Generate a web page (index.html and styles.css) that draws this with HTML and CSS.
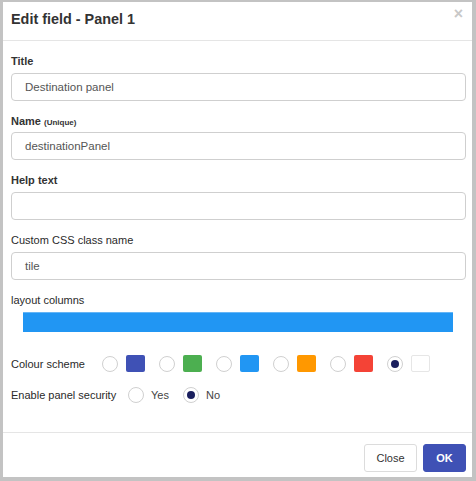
FILE: index.html
```html
<!DOCTYPE html>
<html>
<head>
<meta charset="utf-8">
<link rel="stylesheet" href="styles.css">
</head>
<body>
<div class="dialog">
  <div class="header">
    <h1 class="title">Edit field - Panel 1</h1>
    <span class="close-x">×</span>
  </div>
  <div class="body">
    <div class="group">
      <label class="lbl bold">Title</label>
      <div class="input">Destination panel</div>
    </div>
    <div class="group">
      <label class="lbl bold">Name <small class="small">(Unique)</small></label>
      <div class="input">destinationPanel</div>
    </div>
    <div class="group">
      <label class="lbl bold">Help text</label>
      <div class="input"></div>
    </div>
    <div class="group">
      <label class="lbl">Custom CSS class name</label>
      <div class="input">tile</div>
    </div>
    <div class="group">
      <label class="lbl">layout columns</label>
      <div class="bar"></div>
    </div>
    <div class="row colour-row">
      <span class="lbl row-lbl colour-lbl">Colour scheme</span>
      <span class="opt"><span class="radio"></span><span class="swatch indigo"></span></span>
      <span class="opt"><span class="radio"></span><span class="swatch green"></span></span>
      <span class="opt"><span class="radio"></span><span class="swatch blue"></span></span>
      <span class="opt"><span class="radio"></span><span class="swatch orange"></span></span>
      <span class="opt"><span class="radio"></span><span class="swatch red"></span></span>
      <span class="opt"><span class="radio checked"></span><span class="swatch white"></span></span>
    </div>
    <div class="row sec-row">
      <span class="lbl row-lbl sec-lbl">Enable panel security</span>
      <span class="opt2"><span class="radio"></span><span class="opt-text">Yes</span></span>
      <span class="opt2"><span class="radio checked"></span><span class="opt-text">No</span></span>
    </div>
  </div>
  <div class="footer">
    <button class="btn btn-default">Close</button>
    <button class="btn btn-primary">OK</button>
  </div>
</div>
</body>
</html>
```

FILE: styles.css
```css
html, body {
  margin: 0;
  padding: 0;
}
body {
  background: #c3c3c3;
  font-family: "Liberation Sans", Arial, sans-serif;
  color: #333;
  width: 476px;
  height: 481px;
  overflow: hidden;
}
.dialog {
  margin: 2px 4px 0 3px;
  width: 469px;
  height: 475px;
  background: #fff;
  display: flex;
  flex-direction: column;
  box-sizing: border-box;
}
.header {
  height: 39px;
  border-bottom: 1px solid #e5e5e5;
  position: relative;
  box-sizing: border-box;
  padding-left: 8px;
  display: flex;
  align-items: center;
}
.title {
  margin: 0;
  margin-top: -5px;
  font-size: 14.4px;
  font-weight: bold;
  color: #333;
}
.close-x {
  position: absolute;
  right: 9px;
  top: 2px;
  font-size: 16px;
  font-weight: bold;
  color: #c8c8c8;
  line-height: 20px;
}
.body {
  padding: 13px 6px 0 8px;
  flex: 1;
}
.group {
  margin-bottom: 13px;
}
.lbl {
  display: block;
  height: 14px;
  font-size: 11px;
  line-height: 14px;
  color: #2a2a2a;
  margin-bottom: 5px;
}
.bold {
  font-weight: bold;
  color: #333;
}
.small {
  font-size: 8px;
  line-height: 8px;
  font-weight: bold;
}
.input {
  height: 28px;
  box-sizing: border-box;
  border: 1px solid #cfcfcf;
  border-radius: 4px;
  padding: 0 13px;
  font-size: 11.5px;
  line-height: 26px;
  color: #555;
}
.group:nth-child(2) .input {
  margin-top: -1px;
}
.bar {
  margin: 4px 13px 0 12px;
  height: 20px;
  background: #2196f3;
  border-top: 1px solid #64b5f6;
  box-sizing: border-box;
}
.row {
  display: flex;
  align-items: center;
}
.row-lbl {
  margin: 0;
  flex: none;
}
.colour-row {
  margin-top: 23px;
  height: 17px;
}
.colour-lbl {
  width: 91px;
}
.opt {
  display: flex;
  align-items: center;
  gap: 8px;
  margin-right: 14px;
}
.radio {
  width: 16px;
  height: 16px;
  box-sizing: border-box;
  border: 1px solid #d0d0d0;
  border-radius: 50%;
  background: #fff;
  display: flex;
  align-items: center;
  justify-content: center;
  flex: none;
}
.radio.checked::after {
  content: "";
  width: 8px;
  height: 8px;
  border-radius: 50%;
  background: #1a1f5e;
}
.swatch {
  width: 19px;
  height: 17px;
  border-radius: 2px;
  box-sizing: border-box;
  flex: none;
}
.indigo { background: #3f51b5; }
.green { background: #4caf50; }
.blue { background: #2196f3; }
.orange { background: #ff9800; }
.red { background: #f44336; }
.white { background: #fff; border: 1px solid #e6e6e6; }
.sec-row {
  margin-top: 14px;
  height: 17px;
}
.sec-lbl {
  width: 117px;
}
.opt2 {
  display: flex;
  align-items: center;
  gap: 7px;
  margin-right: 14px;
}
.opt-text {
  font-size: 11px;
  color: #444;
}
.footer {
  border-top: 1px solid #e5e5e5;
  height: 45px;
  box-sizing: border-box;
  padding: 11px 6px 0 0;
  display: flex;
  justify-content: flex-end;
  align-items: flex-start;
  gap: 6px;
}
.btn {
  height: 28px;
  font-family: "Liberation Sans", Arial, sans-serif;
  font-size: 11px;
  border-radius: 3px;
  padding: 0;
  cursor: pointer;
}
.btn-default {
  width: 53px;
  background: #fff;
  border: 1px solid #dcdcdc;
  color: #333;
}
.btn-primary {
  width: 43px;
  background: #3f51b5;
  border: 1px solid #3f51b5;
  color: #fff;
  font-weight: bold;
}
```
